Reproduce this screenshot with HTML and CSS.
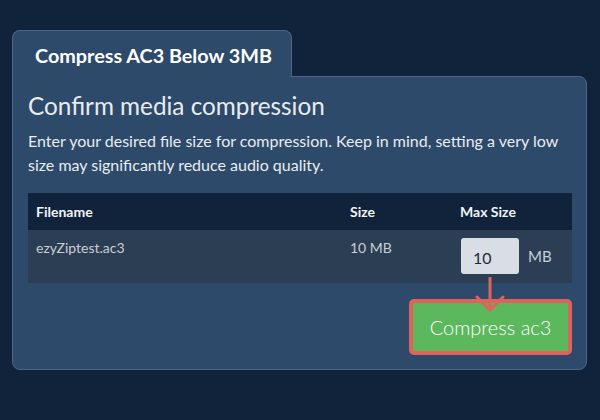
FILE: index.html
```html
<!DOCTYPE html>
<html>
<head>
<meta charset="utf-8">
<link rel="stylesheet" href="styles.css">
</head>
<body>
<div class="page">
  <div class="tabs">
    <div class="tab">Compress AC3 Below 3MB</div>
  </div>
  <div class="card">
    <h2 class="heading">Confirm media compression</h2>
    <p class="desc">Enter your desired file size for compression. Keep in mind, setting a very low size may significantly reduce audio quality.</p>
    <table class="files">
      <thead>
        <tr><th class="c-name">Filename</th><th class="c-size">Size</th><th class="c-max">Max Size</th></tr>
      </thead>
      <tbody>
        <tr>
          <td>ezyZiptest.ac3</td>
          <td>10 MB</td>
          <td><div class="maxcell"><div class="input">10</div><span class="unit">MB</span></div></td>
        </tr>
      </tbody>
    </table>
    <div class="actions">
      <svg class="arrow" width="32" height="38" viewBox="0 0 32 38">
        <path d="M16 1 V33 M3 20 L16 33 L29 20" fill="none" stroke="#e0625b" stroke-width="3" stroke-linecap="round" stroke-linejoin="round"/>
      </svg>
      <button class="btn">Compress ac3</button>
    </div>
  </div>
</div>
</body>
</html>
```
FILE: styles.css
```css
html, body {
  margin: 0;
  padding: 0;
  background: #11233a;
  font-family: Lato, "Open Sans", sans-serif;
}
.page {
  padding: 30px 13px 0 12px;
}
.tabs {
  display: flex;
  position: relative;
  z-index: 2;
}
.tab {
  width: 280px;
  height: 47px;
  box-sizing: border-box;
  background: #2d4a6a;
  border: 1px solid #4c6687;
  border-bottom: none;
  border-radius: 8px 8px 0 0;
  color: #ffffff;
  font-weight: 700;
  font-size: 19.8px;
  padding: 12px 0 0 22px;
  margin-bottom: -1px;
}
.card {
  position: relative;
  z-index: 1;
  background: #2d4a6a;
  border: 1px solid #4c6687;
  border-radius: 0 8px 8px 8px;
  height: 294px;
  box-sizing: border-box;
  padding: 14px 14px 0 15px;
}
.heading {
  margin: 0;
  font-weight: 400;
  font-size: 24.3px;
  line-height: 30px;
  color: #e9ecf0;
}
.desc {
  margin: 8px 0 0 0;
  font-size: 16px;
  line-height: 24px;
  color: #e9ecf0;
}
.files {
  margin-top: 16px;
  width: 544px;
  border-collapse: collapse;
  font-size: 14px;
}
.files th {
  background: #11233a;
  color: #f2f4f7;
  font-weight: 700;
  text-align: left;
  height: 37px;
  padding: 0 8px;
  box-sizing: border-box;
}
.files td {
  background: #2c3e53;
  color: #c8ced7;
  vertical-align: top;
  padding: 8px 8px 8px 8px;
  line-height: 20px;
  height: 53px;
  box-sizing: border-box;
}
.c-name { width: 314px; }
.c-size { width: 110px; }
.maxcell {
  display: flex;
  align-items: center;
  gap: 9px;
  margin-left: 1px;
}
.input {
  width: 58px;
  height: 36px;
  box-sizing: border-box;
  background: #d9dde4;
  border-radius: 3px;
  color: #1e2a3a;
  font-size: 16px;
  padding: 10px 0 0 12px;
}
.unit {
  font-size: 15px;
  color: #c8ced7;
}
.actions {
  position: relative;
  display: flex;
  justify-content: flex-end;
  width: 544px;
  margin-top: 16px;
}
.arrow {
  position: absolute;
  left: 446px;
  top: -22px;
}
.btn {
  width: 163px;
  height: 56px;
  box-sizing: border-box;
  background: #5cb85c;
  border: 4px solid #e0625b;
  border-radius: 5px;
  color: #ffffff;
  font-family: Lato, sans-serif;
  font-weight: 300;
  font-size: 20px;
  padding: 0;
}
```
